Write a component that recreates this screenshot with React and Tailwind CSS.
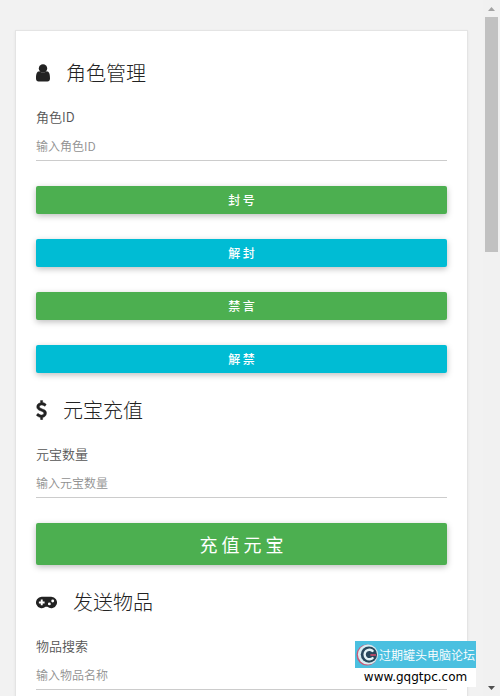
import React from "react";

const UserIcon = () => (
  <svg viewBox="0 0 14 20" className="h-5 w-[14px] shrink-0 fill-current" aria-hidden="true">
    <circle cx="7" cy="5.500" r="4.200" />
    <path d="M3.300 8.300C5.500 10.200 8.500 10.200 10.700 8.300C13.200 8.500 14 11 14 15.500C14 17.500 13 18.500 11.500 18.500H2.500C1 18.500 0 17.500 0 15.500C0 11 .8 8.500 3.300 8.300z" />
  </svg>
);

const DollarIcon = () => (
  <svg
    viewBox="0 0 1024 1792"
    className="h-5 w-[11px] shrink-0 fill-current stroke-current"
    strokeWidth="40"
    aria-hidden="true"
  >
    <path d="M978 1185q0 153-99.5 263.5T620 1585v175q0 14-9 23t-23 9H453q-13 0-22.5-9.5T421 1760v-175q-66-9-127.5-31T192 1509.5t-74-48-46.5-37.5-17.5-18q-17-21-2-41l103-135q7-10 23-12 15-2 24 9l2 2q113 99 243 125 37 8 74 8 81 0 142.5-43t61.5-122q0-28-15-53t-33.5-42-58.5-37.5-66-32-80-32.5q-39-16-61.5-25T349 948.5t-62.5-31T230 882t-53.5-42.5-43.5-49-35.5-58-21-66.5-8.5-78q0-138 98-242t255-134V32q0-13 9.5-22.5T453 0h135q14 0 23 9t9 23v176q57 6 110.5 23t87 33.5T881 304t39 29 15 14q17 18 5 38l-81 146q-8 15-23 16-14 3-27-7-3-3-14.5-12t-39-26.5-58.5-32-74.5-26T537 430q-95 0-155 43t-60 111q0 26 8.5 48t29.5 41.5 39.5 33 56 31 60.5 27 70 27.5q53 20 81 31.5t76 35 75.5 42.5 62 50 53 63.5 31.5 76.5 13 94z" />
  </svg>
);

const GamepadIcon = () => (
  <svg viewBox="0 0 22 20" className="h-5 w-[21px] shrink-0" aria-hidden="true">
    <path fill="currentColor" d="M6 4.500h10a6 6 0 1 1-4 10.500h-2A6 6 0 1 1 6 4.500z" />
    <path fill="#fff" d="M5 7.500h2v2h2v2H7v2H5v-2H3v-2h2z" />
    <circle cx="14" cy="12" r="1.500" fill="#fff" />
    <circle cx="17.500" cy="9" r="1.500" fill="#fff" />
  </svg>
);

function Heading({ icon, children }) {
  return (
    <h2 className="flex h-[30px] items-center gap-4 text-xl font-light text-[#222]">
      {icon}
      <span>{children}</span>
    </h2>
  );
}

function Field({ id, label, placeholder }) {
  return (
    <div className="mt-[19px]">
      <label htmlFor={id} className="block text-[13px] leading-5 font-[350] text-[#555]">
        {label}
      </label>
      <input
        id={id}
        type="text"
        placeholder={placeholder}
        className="mt-1 block h-[30px] w-full border-b border-[#ccc] bg-transparent text-xs font-[350] text-[#555] outline-none placeholder:text-[#909090]"
      />
    </div>
  );
}

const shadow = "shadow-[0_2px_6px_rgba(0,0,0,0.26)]";

function SmallButton({ color, children }) {
  return (
    <button
      type="button"
      className={`mt-[25px] block h-7 w-full rounded-xs text-xs font-medium text-white ${shadow} ${color}`}
    >
      {children}
    </button>
  );
}

function Scrollbar() {
  return (
    <div className="flex w-[17px] shrink-0 flex-col items-center bg-[#f1f1f1]" aria-hidden="true">
      <svg viewBox="0 0 17 17" className="h-[17px] w-full shrink-0">
        <path d="M5 11l3.500-4 3.500 4z" fill="#a3a3a3" />
      </svg>
      <div className="h-[235px] w-[13px] bg-[#c1c1c1]" />
      <svg viewBox="0 0 17 17" className="mt-auto h-[17px] w-full shrink-0">
        <path d="M5 7h7l-3.500 4z" fill="#505050" />
      </svg>
    </div>
  );
}

function Watermark() {
  return (
    <div className="absolute right-6 bottom-[9px] w-[121px] bg-white">
      <div className="flex h-[27px] items-center bg-[#4bc0e0] pl-px">
        <svg viewBox="0 0 24 26" className="h-[26px] w-[23px] shrink-0" aria-hidden="true">
          <ellipse cx="11.500" cy="13" rx="11" ry="11" fill="#c95877" />
          <ellipse cx="12.500" cy="12.500" rx="10.500" ry="10.500" fill="#d8edf2" />
          <circle cx="13.500" cy="12.500" r="8.500" fill="#29485c" />
          <path d="M18 9.500a5 5 0 1 0 0 6" fill="none" stroke="#e3f3f6" strokeWidth="2.500" />
          <path d="M15 12h6v2h-6z" fill="#b64a67" />
        </svg>
        <span className="text-xs leading-4 font-[350] whitespace-nowrap text-white">过期罐头电脑论坛</span>
      </div>
      <div className="h-[19px] text-center font-['DejaVu_Sans'] text-xs leading-[19px] text-black">
        www.gqgtpc.com
      </div>
    </div>
  );
}

export default function App() {
  return (
    <div className="relative flex h-screen overflow-hidden bg-[#f2f2f2] font-['Noto_Sans_CJK_SC',sans-serif]">
      <main className="min-w-0 flex-1 px-[15px] pt-[30px]">
        <form className="border border-[#e4e4e4] bg-white px-5 pt-[27px] pb-10 shadow-[0_1px_3px_rgba(0,0,0,0.06)]">
          <section>
            <Heading icon={<UserIcon />}>角色管理</Heading>
            <Field id="role-id" label="角色ID" placeholder="输入角色ID" />
            <SmallButton color="bg-[#4caf50]">封 号</SmallButton>
            <SmallButton color="bg-[#00bcd4]">解 封</SmallButton>
            <SmallButton color="bg-[#4caf50]">禁 言</SmallButton>
            <SmallButton color="bg-[#00bcd4]">解 禁</SmallButton>
          </section>
          <section className="mt-[22px]">
            <Heading icon={<DollarIcon />}>元宝充值</Heading>
            <Field id="ingots" label="元宝数量" placeholder="输入元宝数量" />
            <button
              type="button"
              className={`mt-[25px] block h-[42px] w-full rounded-xs bg-[#4caf50] text-lg text-white ${shadow}`}
            >
              充 值 元 宝
            </button>
          </section>
          <section className="mt-[22px]">
            <Heading icon={<GamepadIcon />}>发送物品</Heading>
            <Field id="item-search" label="物品搜索" placeholder="输入物品名称" />
          </section>
        </form>
      </main>
      <Scrollbar />
      <Watermark />
    </div>
  );
}
